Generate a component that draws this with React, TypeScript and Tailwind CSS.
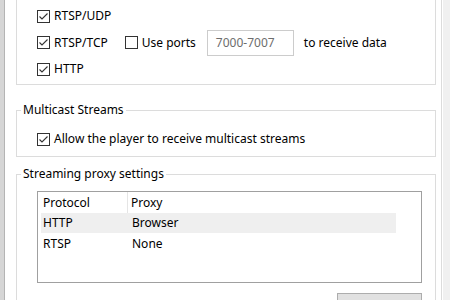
import React from "react";

const Check: React.FC<{ checked?: boolean }> = ({ checked }) => (
  <span className="w-[13px] h-[13px] border border-[#333333] bg-white flex items-center justify-center shrink-0">
    {checked && (
      <svg width="11" height="11" viewBox="0 0 11 11">
        <polyline
          points="1.5,5.5 4,8 9.5,2.5"
          fill="none"
          stroke="#333333"
          strokeWidth="1.1"
        />
      </svg>
    )}
  </span>
);

const CheckRow: React.FC<{ label: string; checked?: boolean }> = ({
  label,
  checked,
}) => (
  <label className="flex items-center gap-[4px]">
    <Check checked={checked} />
    <span>{label}</span>
  </label>
);

const App: React.FC = () => {
  return (
    <div
      className="w-[450px] h-[300px] overflow-hidden flex bg-white text-[12px] text-black"
      style={{ fontFamily: '"Noto Sans", "Open Sans", sans-serif' }}
    >
      {/* left edge */}
      <div className="w-[4px] bg-[#d6d6d6] shrink-0" />
      <div className="w-[1px] bg-[#b4b4b4] shrink-0" />

      <div className="flex-1 pl-[11px] pr-[5px] flex flex-col">
        {/* Transport group (top cut off) */}
        <div className="h-[85px] border-x border-b border-[#dcdcdc] pt-[3px] pl-[20px] shrink-0">
          <div className="h-[26px] flex items-center">
            <CheckRow label="RTSP/UDP" checked />
          </div>
          <div className="h-[27px] flex items-center">
            <CheckRow label="RTSP/TCP" checked />
            <div className="ml-[17px]">
              <CheckRow label="Use ports" />
            </div>
            <div className="ml-[11px] w-[87px] h-[26px] border border-[#cccccc] flex items-center pl-[8px] text-[#6d6d6d]">
              7000-7007
            </div>
            <span className="ml-[10px]">to receive data</span>
          </div>
          <div className="h-[26px] flex items-center">
            <CheckRow label="HTTP" checked />
          </div>
        </div>

        {/* Multicast */}
        <div className="mt-[25px] h-[47px] border border-[#dcdcdc] shrink-0">
          <div className="-mt-[9px] ml-[4px] w-fit bg-white px-[2px] leading-[16px]">
            Multicast Streams
          </div>
          <div className="pl-[20px] mt-[12px]">
            <CheckRow label="Allow the player to receive multicast streams" checked />
          </div>
        </div>

        {/* Streaming proxy */}
        <div className="mt-[17px] flex-1 border-x border-t border-[#dcdcdc] pl-[20px] pr-[13px]">
          <div className="-mt-[9px] -ml-[16px] w-fit bg-white px-[2px] leading-[16px]">
            Streaming proxy settings
          </div>
          <div className="mt-[9px] h-[92px] border border-[#a0a0a0] pl-[3px] pr-[25px]">
            <div className="flex h-[21px] items-center">
              <div className="w-[87px] h-full flex items-center pl-[2px] border-r border-[#e5e5e5]">
                Protocol
              </div>
              <div className="flex-1 pl-[3px]">Proxy</div>
            </div>
            <div className="flex h-[20px] items-center bg-[#efefef]">
              <div className="w-[87px] pl-[2px]">HTTP</div>
              <div className="flex-1 pl-[4px]">Browser</div>
            </div>
            <div className="flex h-[21px] items-center">
              <div className="w-[87px] pl-[2px]">RTSP</div>
              <div className="flex-1 pl-[4px]">None</div>
            </div>
          </div>
          <div className="mt-[10px] flex justify-end">
            <div className="w-[85px] h-[23px] bg-[#e1e1e1] border border-[#adadad]" />
          </div>
        </div>
      </div>

      {/* right edge / scrollbar */}
      <div className="w-[1px] bg-[#dcdcdc] shrink-0" />
      <div className="w-[1px] bg-white shrink-0" />
      <div className="w-[7px] bg-[#f0f0f0] shrink-0" />
    </div>
  );
};

export default App;
